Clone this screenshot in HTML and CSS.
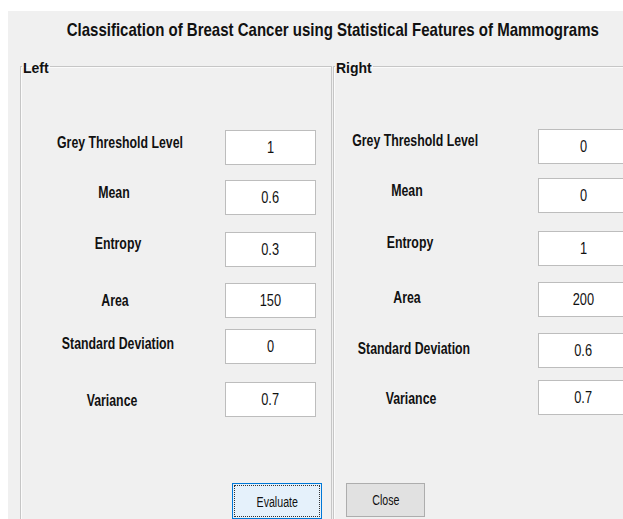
FILE: index.html
```html
<!DOCTYPE html>
<html lang="en">
<head>
<meta charset="utf-8">
<title>Classification of Breast Cancer</title>
<link rel="stylesheet" href="styles.css">
</head>
<body>
<div class="window">
  <div class="title-bar">
    <h1 class="title">Classification of Breast Cancer using Statistical Features of Mammograms</h1>
  </div>
  <div class="panels">
    <fieldset class="panel panel-left">
      <legend class="panel-legend">Left</legend>
      <div class="fields">
        <div class="field"><span class="field-label">Grey Threshold Level</span><div class="field-box"><span class="field-value">1</span></div></div>
        <div class="field"><span class="field-label">Mean</span><div class="field-box"><span class="field-value">0.6</span></div></div>
        <div class="field"><span class="field-label">Entropy</span><div class="field-box"><span class="field-value">0.3</span></div></div>
        <div class="field"><span class="field-label">Area</span><div class="field-box"><span class="field-value">150</span></div></div>
        <div class="field"><span class="field-label">Standard Deviation</span><div class="field-box"><span class="field-value">0</span></div></div>
        <div class="field"><span class="field-label">Variance</span><div class="field-box"><span class="field-value">0.7</span></div></div>
      </div>
      <div class="actions">
        <button class="btn btn-focused" type="button"><span class="btn-text">Evaluate</span></button>
      </div>
    </fieldset>
    <fieldset class="panel panel-right">
      <legend class="panel-legend">Right</legend>
      <div class="fields">
        <div class="field"><span class="field-label">Grey Threshold Level</span><div class="field-box"><span class="field-value">0</span></div></div>
        <div class="field"><span class="field-label">Mean</span><div class="field-box"><span class="field-value">0</span></div></div>
        <div class="field"><span class="field-label">Entropy</span><div class="field-box"><span class="field-value">1</span></div></div>
        <div class="field"><span class="field-label">Area</span><div class="field-box"><span class="field-value">200</span></div></div>
        <div class="field"><span class="field-label">Standard Deviation</span><div class="field-box"><span class="field-value">0.6</span></div></div>
        <div class="field"><span class="field-label">Variance</span><div class="field-box"><span class="field-value">0.7</span></div></div>
      </div>
      <div class="actions">
        <button class="btn btn-close" type="button"><span class="btn-text">Close</span></button>
      </div>
    </fieldset>
  </div>
</div>
</body>
</html>
```
FILE: styles.css
```css
html, body {
  margin: 0;
  padding: 0;
  background: #ffffff;
}

body {
  font-family: "Liberation Sans", Arial, sans-serif;
  color: #000;
}

.window {
  margin: 11px 0 0 8px;
  height: 508px;
  background: #f0f0f0;
  overflow: hidden;
}

/* heading: narrow bold face, centred a little right of the window middle */
.title-bar {
  display: flex;
  justify-content: center;
  padding: 8px 0 0 34px;
  height: 36px;
  box-sizing: border-box;
}

.title {
  flex: none;
  margin: 0;
  font-size: 19px;
  line-height: 22px;
  font-weight: bold;
  white-space: nowrap;
  color: #111;
  transform: scaleX(0.79);
}

.panels {
  display: flex;
  gap: 1px;
  margin: 10px 0 0 12px;
}

/* etched group boxes */
.panel {
  margin: 0;
  padding: 0;
  border: 1px solid #c6c6c6;
  box-shadow: inset 1px 1px 0 #fbfbfb;
  min-width: 0;
  height: 480px;
  box-sizing: border-box;
  flex: none;
}

.panel-left {
  width: 312px;
}

.panel-right {
  width: 320px;
}

.panel-legend {
  margin-left: 1px;
  padding: 5px 1px 0;
  height: 18px;
  box-sizing: border-box;
  font-size: 14px;
  line-height: 13px;
  font-weight: bold;
  color: #111;
}

.fields {
  padding-top: 55px;
  display: flex;
  flex-direction: column;
}

.field {
  --gap: 15px;
  --lift: 9px;
  --drop: 0px;
  --label-w: 196px;
  display: grid;
  grid-template-columns: 204px 91px;
  align-items: center;
  height: 35px;
  margin-top: var(--gap);
}

.field-label {
  width: var(--label-w);
  padding-bottom: var(--lift);
  padding-top: var(--drop);
  text-align: center;
  font-size: 16px;
  font-weight: bold;
  white-space: nowrap;
  color: #111;
  transform: scaleX(0.77);
}

.field-box {
  width: 91px;
  height: 35px;
  box-sizing: border-box;
  border: 1px solid #bdbdbd;
  background: #fff;
  display: flex;
  align-items: center;
  justify-content: center;
}

.field-value {
  display: inline-block;
  font-size: 16px;
  line-height: 18px;
  color: #111;
  transform: scaleX(0.8);
}

/* row spacing, label column and label baselines, left group */
.panel-left .field:nth-child(1) { --gap: 0px;  --lift: 9px;  --label-w: 198px; }
.panel-left .field:nth-child(2) { --gap: 15px; --lift: 9px;  --label-w: 186px; }
.panel-left .field:nth-child(3) { --gap: 17px; --lift: 11px; --label-w: 194px; }
.panel-left .field:nth-child(4) { --gap: 16px; --lift: 0px;  --drop: 1px; --label-w: 188px; }
.panel-left .field:nth-child(5) { --gap: 11px; --lift: 5px;  --label-w: 194px; }
.panel-left .field:nth-child(6) { --gap: 18px; --lift: 0px;  --drop: 3px; --label-w: 182px; }

/* row spacing, label column and label baselines, right group */
.panel-right .fields { padding-top: 54px; }
.panel-right .field:nth-child(1) { --gap: 0px;  --lift: 11px; --label-w: 158px; }
.panel-right .field:nth-child(2) { --gap: 14px; --lift: 9px;  --label-w: 146px; }
.panel-right .field:nth-child(3) { --gap: 18px; --lift: 11px; --label-w: 152px; }
.panel-right .field:nth-child(4) { --gap: 16px; --lift: 3px;  --label-w: 146px; }
.panel-right .field:nth-child(5) { --gap: 16px; --lift: 3px;  --label-w: 160px; }
.panel-right .field:nth-child(6) { --gap: 12px; --lift: 0px;  --drop: 3px; --label-w: 154px; }

.actions {
  display: flex;
}

.panel-left .actions { margin-top: 66px; }
.panel-right .actions { margin-top: 68px; }

.btn {
  font-family: inherit;
  font-size: 14px;
  color: #111;
  margin: 0;
  padding: 0;
  box-sizing: border-box;
}

.btn-text {
  display: inline-block;
  transform: scaleX(0.76);
}

.btn-focused {
  margin-left: 211px;
  width: 90px;
  height: 36px;
  padding-top: 2px;
  background: #e5f1fb;
  border: 1px solid #0078d7;
  outline: 1px dotted #333;
  outline-offset: -3px;
}

.btn-close {
  margin-left: 12px;
  width: 79px;
  height: 34px;
  background: #e1e1e1;
  border: 1px solid #adadad;
}
```
